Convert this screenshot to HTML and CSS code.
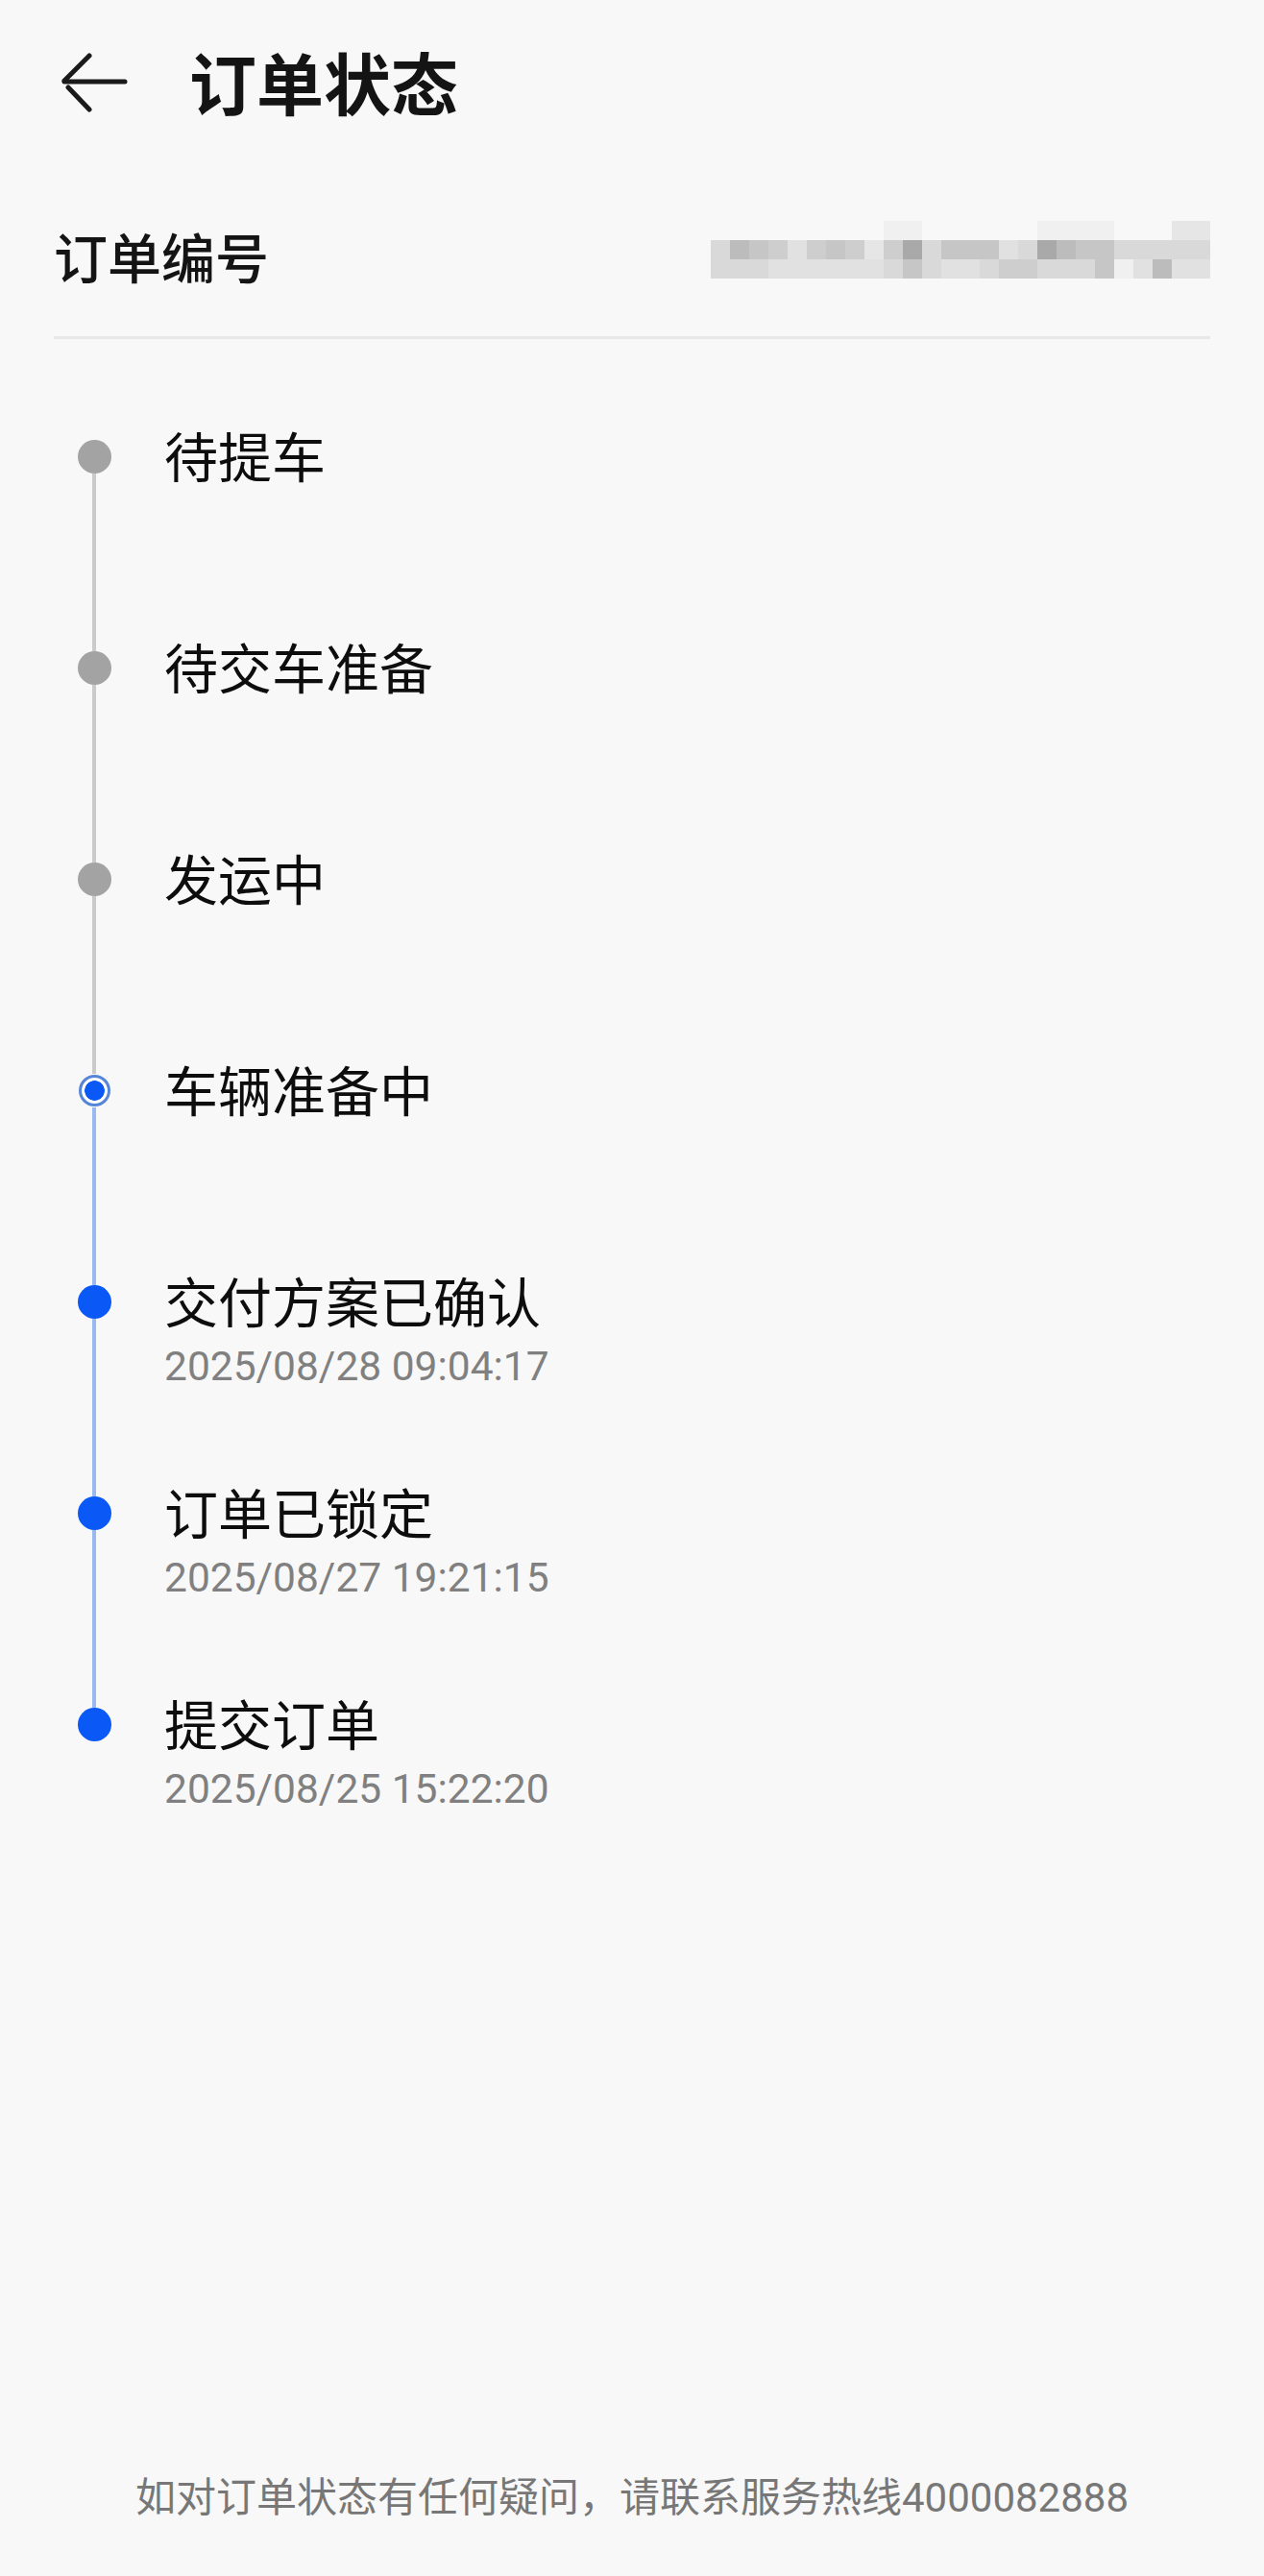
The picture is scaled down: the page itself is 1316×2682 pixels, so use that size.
FILE: index.html
```html
<!DOCTYPE html>
<html lang="zh-CN">
<head>
<meta charset="utf-8">
<title>订单状态</title>
<link rel="stylesheet" href="styles.css">
</head>
<body>
<div class="page">
  <header class="header">
    <svg class="back" viewBox="0 0 70 62" width="70" height="62" aria-hidden="true">
      <path d="M4 30 H67" />
      <path d="M30 3 L4 29" />
      <path d="M8 36 L30 59" />
    </svg>
    <h1 class="title">订单状态</h1>
  </header>

  <section class="order-row">
    <div class="order-label">订单编号</div>
    <div class="mosaic" aria-label="订单编号已隐藏">
      <span class="g9"></span><span class="g9"></span><span class="g9"></span><span class="g9"></span><span class="g9"></span><span class="g9"></span><span class="g9"></span><span class="g9"></span><span class="g9"></span><span class="g8"></span><span class="g8"></span><span class="g9"></span><span class="g9"></span><span class="g9"></span><span class="g9"></span><span class="g9"></span><span class="g9"></span><span class="g8"></span><span class="g8"></span><span class="g8"></span><span class="g8"></span><span class="g9"></span><span class="g9"></span><span class="g9"></span><span class="g7"></span><span class="g7"></span>
      <span class="g5"></span><span class="g2"></span><span class="g3"></span><span class="g4"></span><span class="g6"></span><span class="g4"></span><span class="g3"></span><span class="g4"></span><span class="g7"></span><span class="g4"></span><span class="g1"></span><span class="g5"></span><span class="g3"></span><span class="g3"></span><span class="g3"></span><span class="g6"></span><span class="g5"></span><span class="g1"></span><span class="g2"></span><span class="g3"></span><span class="g3"></span><span class="g5"></span><span class="g5"></span><span class="g5"></span><span class="g5"></span><span class="g5"></span>
      <span class="g5"></span><span class="g5"></span><span class="g5"></span><span class="g6"></span><span class="g6"></span><span class="g6"></span><span class="g6"></span><span class="g6"></span><span class="g6"></span><span class="g5"></span><span class="g3"></span><span class="g5"></span><span class="g6"></span><span class="g6"></span><span class="g5"></span><span class="g4"></span><span class="g4"></span><span class="g5"></span><span class="g5"></span><span class="g5"></span><span class="g3"></span><span class="g8"></span><span class="g6"></span><span class="g2"></span><span class="g6"></span><span class="g6"></span>
    </div>
  </section>

  <ol class="timeline">
    <li class="item">
      <div class="marker"><span class="seg seg-top none"></span><span class="dot gray-dot"></span><span class="seg seg-bottom gray"></span></div>
      <div class="content"><div class="step">待提车</div></div>
    </li>
    <li class="item">
      <div class="marker"><span class="seg seg-top gray"></span><span class="dot gray-dot"></span><span class="seg seg-bottom gray"></span></div>
      <div class="content"><div class="step">待交车准备</div></div>
    </li>
    <li class="item">
      <div class="marker"><span class="seg seg-top gray"></span><span class="dot gray-dot"></span><span class="seg seg-bottom gray"></span></div>
      <div class="content"><div class="step">发运中</div></div>
    </li>
    <li class="item">
      <div class="marker"><span class="seg seg-top gray"></span><span class="dot current"></span><span class="seg seg-bottom blue"></span></div>
      <div class="content"><div class="step">车辆准备中</div></div>
    </li>
    <li class="item">
      <div class="marker"><span class="seg seg-top blue"></span><span class="dot blue-dot"></span><span class="seg seg-bottom blue"></span></div>
      <div class="content"><div class="step">交付方案已确认</div><div class="time">2025/08/28 09:04:17</div></div>
    </li>
    <li class="item">
      <div class="marker"><span class="seg seg-top blue"></span><span class="dot blue-dot"></span><span class="seg seg-bottom blue"></span></div>
      <div class="content"><div class="step">订单已锁定</div><div class="time">2025/08/27 19:21:15</div></div>
    </li>
    <li class="item">
      <div class="marker"><span class="seg seg-top blue"></span><span class="dot blue-dot"></span><span class="seg seg-bottom none"></span></div>
      <div class="content"><div class="step">提交订单</div><div class="time">2025/08/25 15:22:20</div></div>
    </li>
  </ol>

  <footer class="footer">如对订单状态有任何疑问，请联系服务热线4000082888</footer>
</div>
</body>
</html>
```

FILE: styles.css
```css
* { box-sizing: border-box; }

html, body {
  margin: 0;
  padding: 0;
  background: #f8f8f8;
}

body {
  font-family: "Noto Sans CJK SC", "Noto Sans", sans-serif;
  color: #111;
}

.page {
  width: 1316px;
  min-height: 2682px;
  display: flex;
  flex-direction: column;
}

/* Header */
.header {
  height: 170px;
  display: flex;
  align-items: center;
  padding-left: 63px;
}

.back {
  flex: none;
  margin-right: 64px;
  margin-top: 2px;
}

.back path {
  fill: none;
  stroke: #1a1a1a;
  stroke-width: 5;
  stroke-linecap: round;
  stroke-linejoin: round;
}

.title {
  margin: 0;
  font-size: 70px;
  line-height: 80px;
  font-weight: 700;
  color: #141414;
}

/* Order number row */
.order-row {
  margin: 0 56px;
  padding: 64px 0 52px;
  display: flex;
  justify-content: space-between;
  align-items: flex-start;
  border-bottom: 3px solid #e8e8e8;
}

.order-label {
  font-size: 56px;
  line-height: 64px;
  font-weight: 500;
  color: #141414;
}

.mosaic {
  display: grid;
  grid-template-columns: repeat(26, 20px);
  grid-auto-rows: 20px;
  margin-top: -4px;
}

.mosaic span { display: block; }
.g1 { background: #a9a9a9; }
.g2 { background: #bcbcbc; }
.g3 { background: #c6c6c6; }
.g4 { background: #cecece; }
.g5 { background: #d9d9d9; }
.g6 { background: #e1e1e1; }
.g7 { background: #e6e6e6; }
.g8 { background: #f0f0f0; }
.g9 { background: transparent; }

/* Timeline */
.timeline {
  list-style: none;
  margin: 0;
  padding: 91px 0 0 56px;
}

.item {
  display: flex;
  height: 220px;
}

.marker {
  flex: none;
  width: 84px;
  margin-right: 31px;
  display: flex;
  flex-direction: column;
  align-items: center;
}

.seg {
  display: block;
  width: 4px;
  flex: none;
}

.seg-top { height: 14px; }
.seg-bottom { flex: 1; }

.seg.gray { background: #cacaca; }
.seg.blue { background: #99baf0; }
.seg.none { background: transparent; }

.dot {
  display: block;
  flex: none;
  width: 35px;
  height: 35px;
  border-radius: 50%;
}

.gray-dot { background: #a3a3a3; }
.blue-dot { background: #0a59f7; }

.current {
  width: 33px;
  height: 33px;
  margin: 1px 0;
  border: 3px solid #5585d8;
  background: radial-gradient(circle, #0a59f7 0, #0a59f7 10px, #ffffff 10.6px);
}

.content {
  display: flex;
  flex-direction: column;
  margin-top: -3px;
}

.step {
  font-size: 56px;
  line-height: 64px;
  font-weight: 400;
  color: #0d0d0d;
}

.time {
  margin-top: 13px;
  font-family: Roboto, "Noto Sans", sans-serif;
  font-size: 42.5px;
  line-height: 50px;
  color: #808080;
}

/* Footer */
.footer {
  margin-top: auto;
  padding-bottom: 51px;
  text-align: center;
  font-family: Roboto, "Noto Sans CJK SC", sans-serif;
  font-size: 42px;
  line-height: 60px;
  color: #777777;
}
```
